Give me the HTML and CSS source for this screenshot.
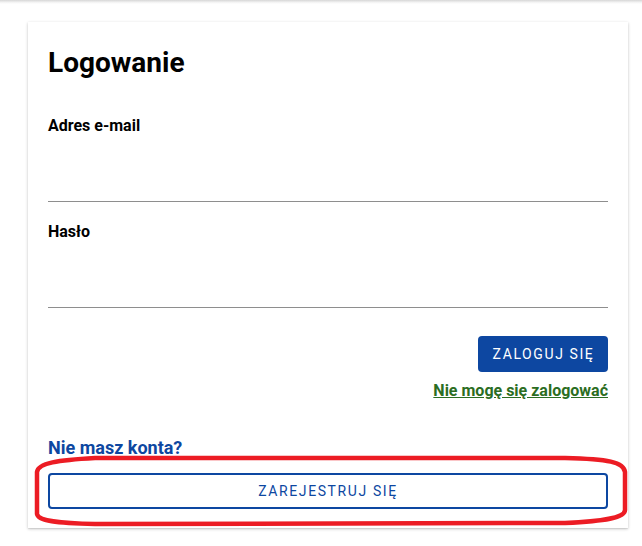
FILE: index.html
```html
<!DOCTYPE html>
<html lang="pl">
<head>
<meta charset="utf-8">
<title>Logowanie</title>
<link rel="stylesheet" href="styles.css">
</head>
<body>
<div class="topbar"></div>
<main class="card">
  <h1 class="title">Logowanie</h1>
  <div class="field first">
    <label class="label" for="email">Adres e-mail</label>
    <input class="input" id="email" type="email">
  </div>
  <div class="field">
    <label class="label" for="pass">Hasło</label>
    <input class="input" id="pass" type="password">
  </div>
  <div class="actions">
    <button class="btn-primary" type="button">ZALOGUJ SIĘ</button>
    <a class="forgot" href="#">Nie mogę się zalogować</a>
  </div>
  <h2 class="noaccount">Nie masz konta?</h2>
  <button class="btn-outline" type="button">ZAREJESTRUJ SIĘ</button>
</main>
<svg class="annotation" width="642" height="546" viewBox="0 0 642 546" aria-hidden="true">
  <path d="M 95 458 L 565 458 C 608 459, 624 462, 625 472 L 625 510 C 625 518, 605 521, 565 523 L 95 524 C 56 523, 38 521, 37 514 L 37 472 C 38 463, 58 460, 95 458 Z" fill="none" stroke="#ec1c24" stroke-width="4.5"/>
</svg>
</body>
</html>
```

FILE: styles.css
```css
* { box-sizing: border-box; }
html, body {
  margin: 0;
  padding: 0;
  background: #ffffff;
  font-family: Roboto, "Liberation Sans", Arial, sans-serif;
  color: #000;
}
body {
  position: relative;
  width: 642px;
  height: 546px;
  overflow: hidden;
}
.topbar {
  height: 4px;
  background: linear-gradient(to bottom, #d6d6d6, #f4f4f4 60%, #ffffff);
}
.card {
  margin: 18px 0 0 28px;
  width: 600px;
  height: 506px;
  padding: 23px 20px 0 20px;
  background: #fff;
  box-shadow: 0 1px 3px rgba(0,0,0,0.22), 0 1px 1px rgba(0,0,0,0.06);
  display: flex;
  flex-direction: column;
}
.title {
  margin: 0;
  font-size: 28px;
  line-height: 36px;
  font-weight: 700;
}
.field {
  display: flex;
  flex-direction: column;
  margin-top: 20px;
}
.field.first { margin-top: 35px; }
.label {
  font-size: 16px;
  line-height: 20px;
  font-weight: 700;
}
.input {
  height: 66px;
  border: none;
  border-bottom: 1px solid #8e8e8e;
  background: transparent;
  outline: none;
  font: inherit;
  padding: 0;
}
.actions {
  display: flex;
  flex-direction: column;
  align-items: flex-end;
  margin-top: 28px;
}
.btn-primary {
  height: 36px;
  width: 130px;
  border: none;
  border-radius: 4px;
  background: #0d47a1;
  color: #fff;
  font-family: inherit;
  font-size: 14px;
  font-weight: 400;
  letter-spacing: 1.6px;
  padding: 0 0 0 1px;
}
.forgot {
  margin-top: 9px;
  font-size: 16px;
  line-height: 20px;
  font-weight: 700;
  color: #2b6d22;
  text-decoration: underline;
}
.noaccount {
  margin: 36px 0 0 0;
  font-size: 18px;
  line-height: 22px;
  font-weight: 700;
  color: #0d47a1;
}
.btn-outline {
  margin-top: 14px;
  height: 36px;
  width: 100%;
  border: 2px solid #0d47a1;
  border-radius: 4px;
  background: #fff;
  color: #0d47a1;
  font-family: inherit;
  font-size: 14px;
  font-weight: 400;
  letter-spacing: 1.6px;
  padding: 0;
}
.annotation {
  position: absolute;
  left: 0;
  top: 0;
  pointer-events: none;
}
```
